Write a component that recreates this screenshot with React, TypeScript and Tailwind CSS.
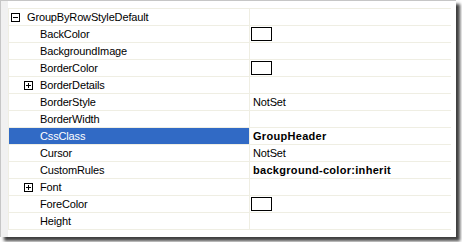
import React from "react";

type Row = {
  name: string;
  level: "root" | "child" | "expand";
  open?: boolean;
  value?: string;
  bold?: boolean;
  swatch?: boolean;
  selected?: boolean;
};

const rows: Row[] = [
  { name: "GroupByRowStyleDefault", level: "root", open: true },
  { name: "BackColor", level: "child", swatch: true },
  { name: "BackgroundImage", level: "child" },
  { name: "BorderColor", level: "child", swatch: true },
  { name: "BorderDetails", level: "expand" },
  { name: "BorderStyle", level: "child", value: "NotSet" },
  { name: "BorderWidth", level: "child" },
  { name: "CssClass", level: "child", value: "GroupHeader", bold: true, selected: true },
  { name: "Cursor", level: "child", value: "NotSet" },
  { name: "CustomRules", level: "child", value: "background-color:inherit", bold: true },
  { name: "Font", level: "expand" },
  { name: "ForeColor", level: "child", swatch: true },
  { name: "Height", level: "child" },
];

function Box({ open }: { open?: boolean }) {
  return (
    <svg width="9" height="9" viewBox="0 0 9 9" className="shrink-0">
      <rect x="0.5" y="0.5" width="8" height="8" fill="#fff" stroke="#000" />
      <line x1="2" y1="4.5" x2="7" y2="4.5" stroke="#000" />
      {!open && <line x1="4.5" y1="2" x2="4.5" y2="7" stroke="#000" />}
    </svg>
  );
}

export default function App() {
  return (
    <div
      className="w-[462px] h-[242px] bg-white overflow-hidden text-[11px] leading-[16px] text-black"
      style={{ fontFamily: '"Liberation Sans", Arial, sans-serif' }}
    >
      <div className="w-[456px] h-[237px] bg-white border-t border-l border-[#c6c6c6] shadow-[4px_4px_3px_rgba(0,0,0,0.75)] flex">
        <div className="w-[7px] bg-[#f1f1f1]" />
        <div className="pt-[7px]">
          <div className="w-[443px] border-t border-l border-[#efeee3]">
            {rows.map((r) => (
              <div key={r.name} className="flex h-[17px] border-b border-[#efeee3]">
                <div
                  className={
                    "w-[241px] border-r border-[#efeee3] flex items-center whitespace-nowrap " +
                    (r.selected ? "bg-[#316ac5] text-white" : "")
                  }
                >
                  {r.level === "root" && (
                    <>
                      <span className="w-[2px]" />
                      <Box open={r.open} />
                      <span className="w-[7px]" />
                    </>
                  )}
                  {r.level === "expand" && (
                    <>
                      <span className="w-[15px]" />
                      <Box open={r.open} />
                      <span className="w-[7px]" />
                    </>
                  )}
                  {r.level === "child" && <span className="w-[31px]" />}
                  <span className="tracking-[-0.15px]">{r.name}</span>
                </div>
                <div className="flex-1 flex items-center whitespace-nowrap">
                  {r.swatch && (
                    <div className="ml-[1px] w-[21px] h-[14px] border border-black bg-white" />
                  )}
                  {r.value && (
                    <span
                      className={
                        "pl-[3px] " + (r.bold ? "font-bold tracking-[0.3px]" : "tracking-[-0.15px]")
                      }
                    >
                      {r.value}
                    </span>
                  )}
                </div>
              </div>
            ))}
          </div>
        </div>
      </div>
    </div>
  );
}
